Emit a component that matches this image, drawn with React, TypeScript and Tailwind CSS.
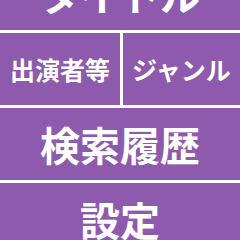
export default function App() {
  const font = { fontFamily: '"Noto Sans CJK JP", "Noto Sans", sans-serif' };
  return (
    <div className="w-[240px] h-[240px] overflow-hidden bg-[#8e5aad] text-white font-bold" style={font}>
      <div className="-mt-[42px] flex flex-col">
        <div className="h-[75px] border-b-[3px] border-white flex items-center justify-center text-[40px] leading-none">タイトル</div>
        <div className="h-[75px] border-b-[3px] border-white flex">
          <div className="w-[123px] border-r-[3px] border-white flex items-center justify-center text-[25px] leading-none">出演者等</div>
          <div className="flex-1 flex items-center justify-center text-[25px] leading-none">ジャンル</div>
        </div>
        <div className="h-[75px] border-b-[3px] border-white flex items-center justify-center text-[40px] leading-none">検索履歴</div>
        <div className="h-[75px] border-b-[3px] border-white flex items-center justify-center text-[40px] leading-none">設定</div>
      </div>
    </div>
  );
}
